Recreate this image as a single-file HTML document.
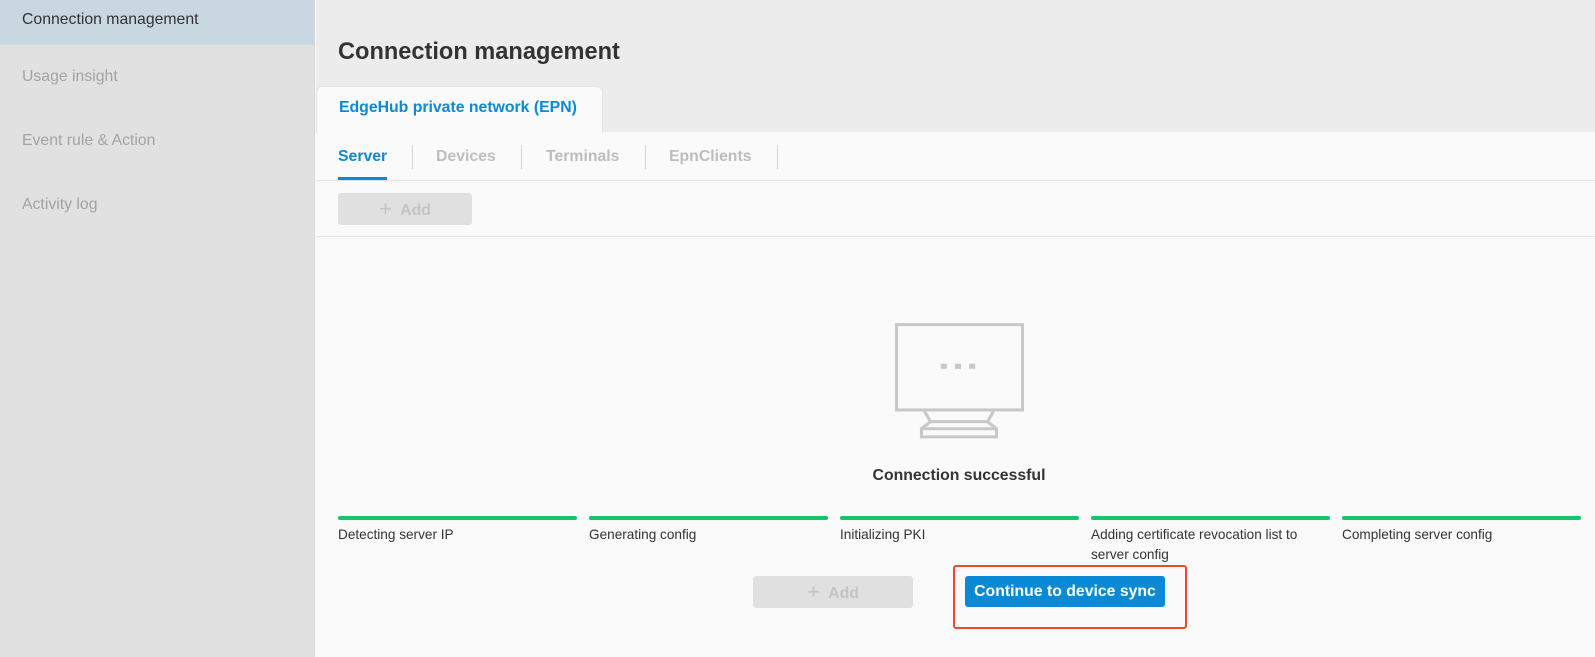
<!DOCTYPE html>
<html><head><meta charset="utf-8"><style>
*{margin:0;padding:0;box-sizing:border-box}
body{width:1595px;height:657px;overflow:hidden;font-family:"Liberation Sans",Arial,sans-serif;background:#fafafa;position:relative}
.abs{position:absolute}
#side{left:0;top:0;width:315px;height:657px;background:#e1e1e1;border-right:1px solid #d6d6d6}
.si{position:absolute;left:22px;font-size:15.8px;color:#a3a3a3}
#main{left:316px;top:0;right:0;height:132px;background:#ececec}
.bar{height:4px;background:#14c46a;border-radius:2px;top:516px;width:239px}
.lbl{top:525px;font-size:13.6px;color:#333;line-height:20px;width:236px}
.st{top:148px;font-size:15.8px;font-weight:bold;color:#bdbdbd}
.sep{top:145px;width:1px;height:24px;background:#d4d4d4}
</style></head><body>
<div id="side" class="abs">
 <div class="abs" style="left:0;top:0;width:314px;height:45px;background:#c9d7e0"></div>
 <div class="si" style="top:11px;color:#333">Connection management</div>
 <div class="si" style="top:68px">Usage insight</div>
 <div class="si" style="top:132px">Event rule &amp; Action</div>
 <div class="si" style="top:196px">Activity log</div>
</div>
<div id="main" class="abs"></div>
<div class="abs" style="left:338px;top:39px;font-size:23.6px;font-weight:bold;color:#333">Connection management</div>
<div class="abs" style="left:316px;top:86px;width:287px;height:47px;background:#fafafa;border-radius:6px 6px 0 0;border:1px solid #e2e2e2;border-bottom:none"></div>
<div class="abs" style="left:339px;top:99px;font-size:15.8px;font-weight:bold;color:#0a8ad6">EdgeHub private network (EPN)</div>
<div class="abs st" style="left:338px;color:#0a8ad6">Server</div>
<div class="abs" style="left:338px;top:177px;width:49px;height:3px;background:#0a8ad6"></div>
<div class="abs sep" style="left:412px"></div>
<div class="abs st" style="left:436px">Devices</div>
<div class="abs sep" style="left:521px"></div>
<div class="abs st" style="left:546px">Terminals</div>
<div class="abs sep" style="left:645px"></div>
<div class="abs st" style="left:669px">EpnClients</div>
<div class="abs sep" style="left:777px"></div>
<div class="abs" style="left:316px;top:180px;right:0;height:1px;background:#e2e2e2"></div>
<div class="abs" style="left:338px;top:193px;width:134px;height:32px;background:#e0e0e0;border-radius:3px;color:#c4c4c4;font-size:15.8px;font-weight:bold;text-align:center;line-height:32px"><span style="font-weight:normal;font-size:22px;vertical-align:-1px">+</span>&nbsp; Add</div>
<div class="abs" style="left:316px;top:236px;right:0;height:1px;background:#e2e2e2"></div>
<svg class="abs" style="left:893px;top:321px" width="132" height="120" viewBox="0 0 130 118">
 <g fill="none" stroke="#c8c8c8" stroke-width="3">
  <rect x="3.5" y="3.5" width="124" height="84"/>
  <path d="M31 89 L37 99 L93 99 L99 89"/>
  <path d="M37 99 L28 106 L28 114 L102 114 L102 106 L93 99"/>
  <path d="M28 106 L102 106"/>
 </g>
 <g fill="#c8c8c8"><rect x="47" y="42" width="6" height="5"/><rect x="61" y="42" width="6" height="5"/><rect x="75" y="42" width="6" height="5"/></g>
</svg>
<div class="abs" style="left:0;width:1918px;top:467px;text-align:center;font-size:15.8px;font-weight:bold;color:#333">Connection successful</div>
<div class="abs bar" style="left:338px"></div><div class="abs lbl" style="left:338px">Detecting server IP</div>
<div class="abs bar" style="left:589px"></div><div class="abs lbl" style="left:589px">Generating config</div>
<div class="abs bar" style="left:840px"></div><div class="abs lbl" style="left:840px">Initializing PKI</div>
<div class="abs bar" style="left:1091px"></div><div class="abs lbl" style="left:1091px">Adding certificate revocation list to server config</div>
<div class="abs bar" style="left:1342px"></div><div class="abs lbl" style="left:1342px">Completing server config</div>
<div class="abs" style="left:753px;top:576px;width:160px;height:32px;background:#e0e0e0;border-radius:3px;color:#c4c4c4;font-size:15.8px;font-weight:bold;text-align:center;line-height:32px"><span style="font-weight:normal;font-size:22px;vertical-align:-1px">+</span>&nbsp; Add</div>
<div class="abs" style="left:965px;top:576px;width:200px;height:31px;background:#0a8ad6;border-radius:3px;color:#fff;font-size:15.8px;font-weight:bold;text-align:center;line-height:31px">Continue to device sync</div>
<div class="abs" style="left:953px;top:565px;width:234px;height:64px;border:2px solid #f04a2a;border-radius:3px"></div>
</body></html>
